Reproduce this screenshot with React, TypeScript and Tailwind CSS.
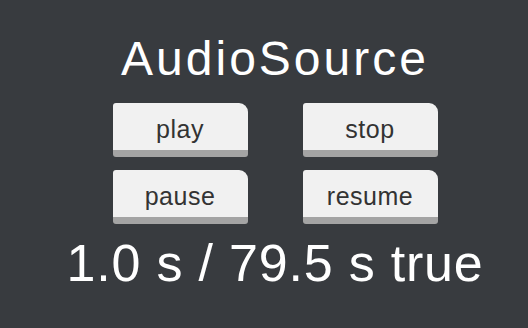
import React from 'react';

const buttons = ['play', 'stop', 'pause', 'resume'];

function PanelButton({ label }: { label: string }) {
  return (
    <button
      type="button"
      className="flex h-[54px] w-[135px] items-center justify-center rounded-[3px] rounded-tr-[9px] border-b-[7px] border-[#a4a4a4] bg-[#f1f1f1] pt-[5px] text-[25px] leading-[25px] tracking-[0.5px] text-[#333333]"
    >
      {label}
    </button>
  );
}

export default function App() {
  return (
    <div
      className="flex h-[328px] w-[528px] flex-col items-center bg-[#383b3f] pl-[22px]"
      style={{ fontFamily: '"Liberation Sans", Arial, sans-serif' }}
    >
      <h1 className="mt-[35px] text-[48px] leading-[48px] tracking-[3px] text-white">
        AudioSource
      </h1>
      <div className="mt-[20px] grid grid-cols-2 gap-x-[55px] gap-y-[13px]">
        {buttons.map((b) => (
          <PanelButton key={b} label={b} />
        ))}
      </div>
      <div className="mt-[13px] text-[52px] leading-[52px] tracking-[0.8px] text-white">
        1.0 s / 79.5 s true
      </div>
    </div>
  );
}
